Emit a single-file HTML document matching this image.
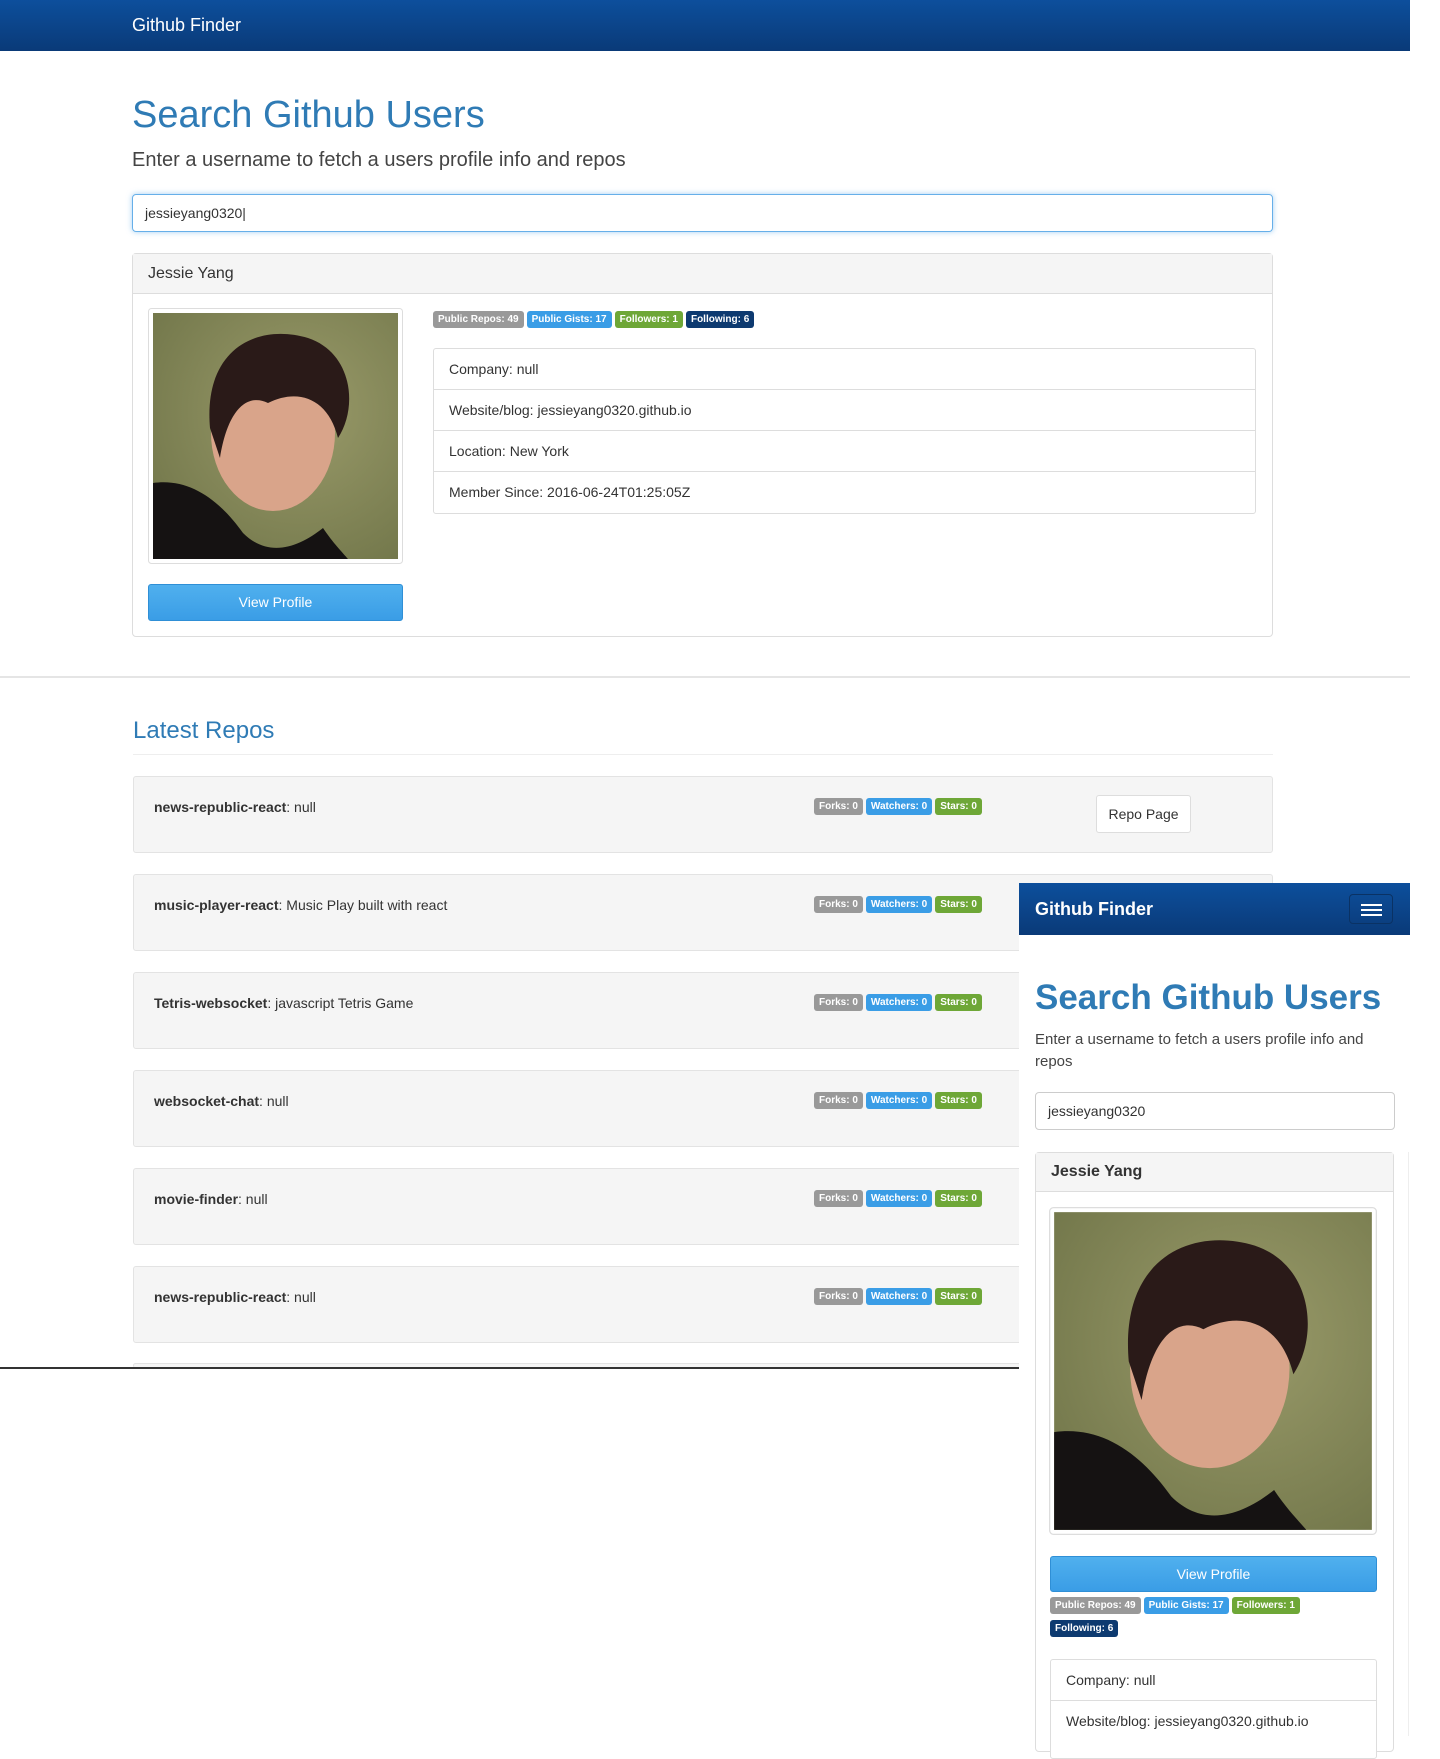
<!DOCTYPE html>
<html><head><meta charset="utf-8"><style>
*{box-sizing:border-box;margin:0;padding:0}
body{width:1440px;height:1736px;position:relative;background:#fff;font-family:"Liberation Sans",Arial,sans-serif;color:#333;overflow:hidden}
.a{position:absolute}
.nav{background:linear-gradient(#0d4f9c,#0a3a78);color:#fff}
.badge{display:inline-block;color:#fff;font-weight:bold;font-size:10px;padding:3px 5px;border-radius:3px;margin-right:3px;line-height:11px;vertical-align:top}
.g{background:#999}.b{background:#3a9de6}.gr{background:#6ea737}.d{background:#0d3a70}
.lg{border:1px solid #ddd;border-radius:3px;background:#fff}
.lg div{height:41px;line-height:40px;padding-left:15px;border-bottom:1px solid #ddd;font-size:14px}
.lg div:last-child{border-bottom:none}
.well{background:#f5f5f5;border:1px solid #e3e3e3;border-radius:3px;left:133px;width:1140px;height:77px}
.well .t{position:absolute;left:20px;top:22px;font-size:14px}
.well .bd{position:absolute;left:680px;top:21px}
.btn{background:linear-gradient(#50b0ee,#3a9de6);color:#fff;text-align:center;border-radius:3px;border:1px solid #2f8fd6}
</style></head><body>
<div class="a nav" style="left:0;top:0;width:1410px;height:51px"><div class="a" style="left:132px;top:15px;font-size:18px">Github Finder</div></div>
<div class="a" style="left:132px;top:94px;font-size:38px;color:#2f7bb5">Search Github Users</div>
<div class="a" style="left:132px;top:149px;font-size:20px;color:#444">Enter a username to fetch a users profile info and repos</div>
<div class="a" style="left:132px;top:194px;width:1141px;height:38px;border:1px solid #66afe9;border-radius:4px;box-shadow:0 0 6px rgba(102,175,233,.6);font-size:14px;padding:10px 12px">jessieyang0320|</div>
<div class="a" style="left:132px;top:253px;width:1141px;height:384px;border:1px solid #ddd;border-radius:4px">
 <div style="background:#f5f5f5;height:40px;border-bottom:1px solid #ddd;padding:11px 15px;font-size:16px">Jessie Yang</div>
</div>
<svg class="a" style="left:148px;top:308px" width="255" height="256" viewBox="0 0 255 256">
 <rect x="0.5" y="0.5" width="254" height="255" rx="3" fill="#fff" stroke="#ddd"/>
 <defs><radialGradient id="bg" cx="0.6" cy="0.4" r="0.8"><stop offset="0" stop-color="#9a9b6a"/><stop offset="1" stop-color="#6f7448"/></radialGradient></defs>
 <rect x="5" y="5" width="245" height="246" fill="url(#bg)"/>
 <ellipse cx="125" cy="125" rx="62" ry="78" fill="#d9a48a"/>
 <path d="M62 120 C55 40 110 15 160 30 C205 45 210 100 190 130 C180 90 150 80 120 95 C100 85 80 100 72 150 Z" fill="#2a1a18"/>
 <path d="M5 251 L5 175 C40 170 70 190 95 225 C120 250 150 240 175 220 C185 235 195 245 200 251 Z" fill="#151212"/>
</svg>
<div class="a btn" style="left:148px;top:584px;width:255px;height:37px;line-height:35px;font-size:14px">View Profile</div>
<div class="a" style="left:433px;top:311px"><span class="badge g">Public Repos: 49</span><span class="badge b">Public Gists: 17</span><span class="badge gr">Followers: 1</span><span class="badge d">Following: 6</span></div>
<div class="a lg" style="left:433px;top:348px;width:823px"><div>Company: null</div><div>Website/blog: jessieyang0320.github.io</div><div>Location: New York</div><div>Member Since: 2016-06-24T01:25:05Z</div></div>
<div class="a" style="left:0;top:676px;width:1410px;height:2px;background:#e5e5e5"></div>
<div class="a" style="left:133px;top:717px;font-size:24px;color:#2f7bb5">Latest Repos</div>
<div class="a" style="left:133px;top:754px;width:1140px;height:1px;background:#eee"></div>
<div class="a well" style="top:776px"><div class="t"><b>news-republic-react</b>: null</div><div class="bd"><span class="badge g">Forks: 0</span><span class="badge b">Watchers: 0</span><span class="badge gr">Stars: 0</span></div><div class="a" style="left:962px;top:18px;width:95px;height:38px;background:#fff;border:1px solid #ddd;border-radius:3px;text-align:center;line-height:36px;font-size:14px">Repo Page</div></div>
<div class="a well" style="top:874px"><div class="t"><b>music-player-react</b>: Music Play built with react</div><div class="bd"><span class="badge g">Forks: 0</span><span class="badge b">Watchers: 0</span><span class="badge gr">Stars: 0</span></div></div>
<div class="a well" style="top:972px"><div class="t"><b>Tetris-websocket</b>: javascript Tetris Game</div><div class="bd"><span class="badge g">Forks: 0</span><span class="badge b">Watchers: 0</span><span class="badge gr">Stars: 0</span></div></div>
<div class="a well" style="top:1070px"><div class="t"><b>websocket-chat</b>: null</div><div class="bd"><span class="badge g">Forks: 0</span><span class="badge b">Watchers: 0</span><span class="badge gr">Stars: 0</span></div></div>
<div class="a well" style="top:1168px"><div class="t"><b>movie-finder</b>: null</div><div class="bd"><span class="badge g">Forks: 0</span><span class="badge b">Watchers: 0</span><span class="badge gr">Stars: 0</span></div></div>
<div class="a well" style="top:1266px"><div class="t"><b>news-republic-react</b>: null</div><div class="bd"><span class="badge g">Forks: 0</span><span class="badge b">Watchers: 0</span><span class="badge gr">Stars: 0</span></div></div>
<div class="a well" style="top:1363px;height:5px;border-bottom:none"></div>
<div class="a" style="left:0;top:1367px;width:1019px;height:2px;background:#333"></div>
<div class="a" style="left:1019px;top:883px;width:391px;height:853px;background:#fff"></div>
<div class="a nav" style="left:1019px;top:883px;width:391px;height:52px"><div class="a" style="left:16px;top:16px;font-size:18px;font-weight:bold">Github Finder</div>
 <div class="a" style="left:330px;top:11px;width:44px;height:30px;border:1px solid #0a3264;border-radius:4px"><div class="a" style="left:11px;top:9px;width:21px;height:2px;background:#fff"></div><div class="a" style="left:11px;top:14px;width:21px;height:2px;background:#fff"></div><div class="a" style="left:11px;top:19px;width:21px;height:2px;background:#fff"></div></div></div>
<div class="a" style="left:1035px;top:978px;font-size:35px;color:#2f7bb5;font-weight:bold">Search Github Users</div>
<div class="a" style="left:1035px;top:1029px;width:345px;font-size:15px;line-height:22px;color:#444">Enter a username to fetch a users profile info and repos</div>
<div class="a" style="left:1035px;top:1092px;width:360px;height:38px;border:1px solid #ccc;border-radius:4px;font-size:14px;padding:10px 12px">jessieyang0320</div>
<div class="a" style="left:1035px;top:1152px;width:359px;height:600px;border:1px solid #ddd;border-radius:4px"><div style="background:#f5f5f5;height:39px;border-bottom:1px solid #ddd;padding:10px 15px;font-size:16px;font-weight:bold">Jessie Yang</div></div>
<div class="a" style="left:1408px;top:1152px;width:1px;height:584px;background:#eee"></div>
<svg class="a" style="left:1049px;top:1207px" width="328" height="328" viewBox="0 0 255 255" preserveAspectRatio="none">
 <rect x="0.5" y="0.5" width="254" height="254" rx="3" fill="#fff" stroke="#ddd"/>
 <defs><radialGradient id="bg2" cx="0.6" cy="0.4" r="0.8"><stop offset="0" stop-color="#9a9b6a"/><stop offset="1" stop-color="#6f7448"/></radialGradient></defs>
 <rect x="4" y="4" width="247" height="247" fill="url(#bg2)"/>
 <ellipse cx="125" cy="125" rx="62" ry="78" fill="#d9a48a"/>
 <path d="M62 120 C55 40 110 15 160 30 C205 45 210 100 190 130 C180 90 150 80 120 95 C100 85 80 100 72 150 Z" fill="#2a1a18"/>
 <path d="M4 251 L4 175 C40 170 70 190 95 225 C120 250 150 240 175 220 C185 235 195 245 200 251 Z" fill="#151212"/>
</svg>
<div class="a btn" style="left:1050px;top:1556px;width:327px;height:36px;line-height:34px;font-size:14px">View Profile</div>
<div class="a" style="left:1050px;top:1597px;width:327px;line-height:20px"><span class="badge g">Public Repos: 49</span><span class="badge b">Public Gists: 17</span><span class="badge gr">Followers: 1</span><br><span class="badge d" style="margin-top:3px">Following: 6</span></div>
<div class="a lg" style="left:1050px;top:1659px;width:327px;height:100px"><div>Company: null</div><div>Website/blog: jessieyang0320.github.io</div></div>
</body></html>
